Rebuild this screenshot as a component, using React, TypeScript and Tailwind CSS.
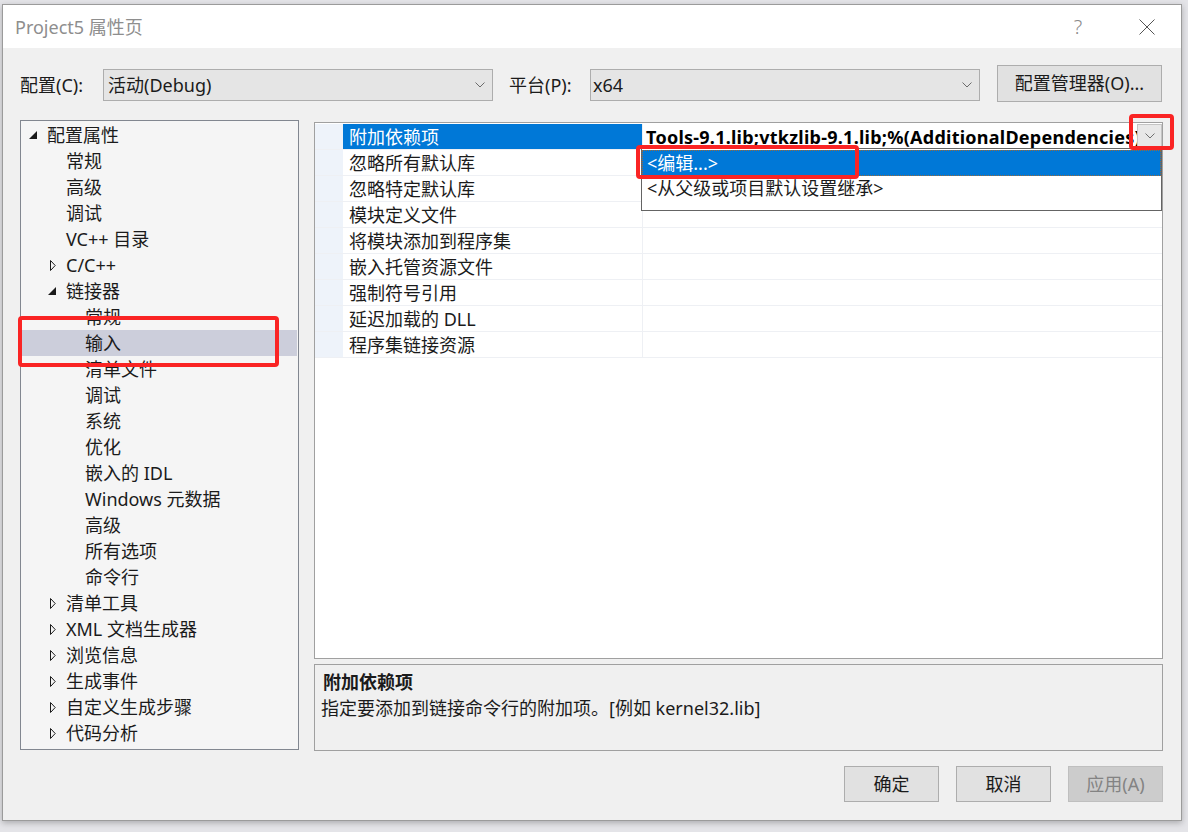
import React from "react";

type TreeItem = { t: string; l: 0 | 1 | 2; exp?: boolean; col?: boolean; sel?: boolean };

const tree: TreeItem[] = [
  { t: "配置属性", l: 0, exp: true },
  { t: "常规", l: 1 },
  { t: "高级", l: 1 },
  { t: "调试", l: 1 },
  { t: "VC++ 目录", l: 1 },
  { t: "C/C++", l: 1, col: true },
  { t: "链接器", l: 1, exp: true },
  { t: "常规", l: 2 },
  { t: "输入", l: 2, sel: true },
  { t: "清单文件", l: 2 },
  { t: "调试", l: 2 },
  { t: "系统", l: 2 },
  { t: "优化", l: 2 },
  { t: "嵌入的 IDL", l: 2 },
  { t: "Windows 元数据", l: 2 },
  { t: "高级", l: 2 },
  { t: "所有选项", l: 2 },
  { t: "命令行", l: 2 },
  { t: "清单工具", l: 1, col: true },
  { t: "XML 文档生成器", l: 1, col: true },
  { t: "浏览信息", l: 1, col: true },
  { t: "生成事件", l: 1, col: true },
  { t: "自定义生成步骤", l: 1, col: true },
  { t: "代码分析", l: 1, col: true },
];

const props = [
  "附加依赖项",
  "忽略所有默认库",
  "忽略特定默认库",
  "模块定义文件",
  "将模块添加到程序集",
  "嵌入托管资源文件",
  "强制符号引用",
  "延迟加载的 DLL",
  "程序集链接资源",
];

const Chevron = ({ color = "#6b6b6b" }: { color?: string }) => (
  <svg width="10" height="6" viewBox="0 0 10 6">
    <polyline points="0.5,0.5 5,5 9.5,0.5" fill="none" stroke={color} strokeWidth="1" />
  </svg>
);

const Expanded = () => (
  <svg width="8" height="8" viewBox="0 0 8 8">
    <polygon points="8,0 8,8 0,8" fill="#1a1a1a" />
  </svg>
);

const Collapsed = () => (
  <svg width="6" height="11" viewBox="0 0 6 11">
    <polygon points="0.5,0.5 5.2,5.5 0.5,10.5" fill="none" stroke="#1a1a1a" strokeWidth="1" />
  </svg>
);

function TreeRow({ item }: { item: TreeItem }) {
  const indent = item.l === 0 ? "w-[7px]" : item.l === 1 ? "w-[26px]" : "w-[45px]";
  return (
    <div
      className={`flex items-center h-[26px] leading-[26px] text-[18px] text-[#1b1b1b] whitespace-nowrap ${
        item.sel ? "bg-[#cccedb]" : ""
      }`}
    >
      <div className={`${indent} shrink-0`} />
      <div className="w-[18px] shrink-0 flex items-center">
        {item.exp ? <Expanded /> : item.col ? <div className="ml-[2px] flex"><Collapsed /></div> : null}
      </div>
      <span>{item.t}</span>
    </div>
  );
}

export default function App() {
  return (
    <div className="w-[1188px] h-[832px] bg-[#e4e4e8] relative overflow-hidden pl-[2px] pt-[4px] font-['Noto_Sans','Noto_Sans_CJK_SC',sans-serif] text-black">
      <div className="w-[1180px] h-[817px] border border-[#9b9b9b] bg-[#f0f0f0] flex flex-col shadow-[0_2px_6px_rgba(0,0,0,0.25)]">
        {/* Title bar */}
        <div className="h-[43px] bg-white flex items-center shrink-0">
          <span className="pl-[12px] text-[18px] text-[#8e8e8e] leading-none">Project5 属性页</span>
          <div className="ml-auto flex items-center">
            <span className="w-[20px] text-center text-[20px] font-light text-[#8a8a8a] leading-none">?</span>
            <div className="w-[51px]" />
            <svg width="16" height="16" viewBox="0 0 16 16" className="mr-[26px]">
              <line x1="0.5" y1="0.5" x2="15.5" y2="15.5" stroke="#555" strokeWidth="1" />
              <line x1="15.5" y1="0.5" x2="0.5" y2="15.5" stroke="#555" strokeWidth="1" />
            </svg>
          </div>
        </div>

        {/* Config row */}
        <div className="h-[72px] flex items-start pl-[17px] shrink-0 text-[18px] text-[#1b1b1b]">
          <div className="w-[83px] h-[32px] mt-[21px] leading-[32px]">配置(C):</div>
          <div className="w-[390px] h-[32px] mt-[21px] border border-[#adadad] bg-[#e5e5e5] flex items-center pl-[4px] pr-[7px]">
            <span className="leading-none">活动(Debug)</span>
            <div className="ml-auto flex">
              <Chevron />
            </div>
          </div>
          <div className="w-[81px] ml-[16px] h-[32px] mt-[21px] leading-[32px]">平台(P):</div>
          <div className="w-[390px] h-[32px] mt-[21px] border border-[#adadad] bg-[#e5e5e5] flex items-center pl-[2px] pr-[7px]">
            <span className="leading-none">x64</span>
            <div className="ml-auto flex">
              <Chevron />
            </div>
          </div>
          <div className="w-[165px] ml-[17px] h-[37px] mt-[17px] border border-[#adadad] bg-[#e1e1e1] flex items-center justify-center">
            配置管理器(O)...
          </div>
        </div>

        {/* Main area */}
        <div className="h-[631px] flex pl-[17px] shrink-0">
          <div className="w-[279px] h-[630px] border border-[#828790] bg-[#f5f5f5] p-[1px] overflow-hidden">
            {tree.map((it, i) => (
              <TreeRow key={i} item={it} />
            ))}
          </div>
          <div className="ml-[15px] w-[849px] flex flex-col">
            <div className="mt-[2px] h-[537px] border border-[#a0a0a0] bg-white pt-[1px] overflow-hidden">
              {props.map((p, i) => (
                <div key={i} className="flex h-[26px] border-b border-[#eef0f4]">
                  <div className="w-[28px] shrink-0 bg-[#eef3fa]" />
                  <div
                    className={`w-[299px] shrink-0 pl-[6px] text-[18px] leading-[26px] whitespace-nowrap ${
                      i === 0 ? "bg-[#0078d7] text-white" : "text-[#1b1b1b]"
                    }`}
                  >
                    {p}
                  </div>
                  <div className="flex-1 border-l border-[#eef0f4] flex overflow-hidden">
                    {i === 0 && (
                      <>
                        <div className="flex-1 overflow-hidden whitespace-nowrap pl-[3px] text-[18px] leading-[26px] font-bold tracking-[0.25px] text-black">
                          Tools-9.1.lib;vtkzlib-9.1.lib;%(AdditionalDependencies)
                        </div>
                        <div className="w-[25px] h-[23px] shrink-0 border border-[#c4c4c4] bg-[#e8e8e8] flex items-center justify-center">
                          <Chevron color="#707070" />
                        </div>
                      </>
                    )}
                  </div>
                </div>
              ))}
            </div>
            <div className="mt-[5px] h-[87px] border border-[#a0a0a0] bg-[#f0f0f0] px-[8px] pt-[4px]">
              <div className="text-[18px] font-bold leading-[26px] text-[#1b1b1b]">附加依赖项</div>
              <div className="text-[18px] leading-[26px] text-[#1b1b1b] -ml-[2px]">
                指定要添加到链接命令行的附加项。[例如 kernel32.lib]
              </div>
            </div>
          </div>
        </div>

        {/* Buttons */}
        <div className="flex justify-end gap-[17px] pt-[15px] pr-[18px] text-[18px]">
          <div className="w-[95px] h-[36px] border border-[#adadad] bg-[#e1e1e1] flex items-center justify-center text-[#1b1b1b]">
            确定
          </div>
          <div className="w-[95px] h-[36px] border border-[#adadad] bg-[#e1e1e1] flex items-center justify-center text-[#1b1b1b]">
            取消
          </div>
          <div className="w-[95px] h-[36px] border border-[#bfbfbf] bg-[#cccccc] flex items-center justify-center text-[#838383]">
            应用(A)
          </div>
        </div>
      </div>

      {/* Dropdown list overlay */}
      <div className="absolute left-[641px] top-[148px] w-[521px] h-[63px] border border-[#646464] bg-white pt-[1px] text-[18px]">
        <div className="h-[26px] bg-[#0078d7] text-white leading-[24px] pl-[4px] border border-dotted border-[#9a6a3a]">
          &lt;编辑...&gt;
        </div>
        <div className="h-[24px] leading-[24px] pl-[5px] text-[#1b1b1b]">&lt;从父级或项目默认设置继承&gt;</div>
      </div>

      {/* Red annotation boxes */}
      <div className="absolute left-[18px] top-[316px] w-[261px] h-[51px] border-[4px] border-[#fa2424] rounded-[4px]" />
      <div className="absolute left-[636px] top-[145px] w-[223px] h-[34px] border-[4px] border-[#fa2424] rounded-[4px]" />
      <div className="absolute left-[1129px] top-[114px] w-[45px] h-[36px] border-[4px] border-[#fa2424] rounded-[4px]" />
    </div>
  );
}
